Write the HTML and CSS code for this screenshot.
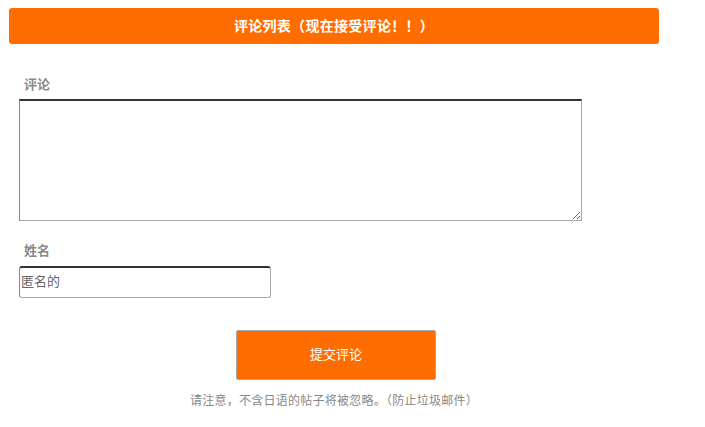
FILE: index.html
```html
<!DOCTYPE html>
<html lang="zh-CN">
<head>
    <meta charset="UTF-8">
    <meta name="viewport" content="width=device-width, initial-scale=1.0">
    <title>评论列表</title>
    <link rel="stylesheet" href="styles.css">
</head>
<body>
    <div class="wrap">
        <h2 class="comment-title">评论列表（现在接受评论！！）</h2>

        <form class="comment-form" onsubmit="return false;">
            <label class="field-label" for="comment">评论</label>
            <textarea id="comment" class="comment-box"></textarea>

            <label class="field-label name-label" for="name">姓名</label>
            <input id="name" class="name-box" type="text" value="匿名的">

            <button type="submit" class="submit-btn">提交评论</button>
            <p class="notice">请注意，不含日语的帖子将被忽略。（防止垃圾邮件）</p>
        </form>
    </div>
</body>
</html>
```

FILE: styles.css
```css
body {
    margin: 0;
    background-color: #fff;
    font-family: 'Noto Sans CJK SC', 'Noto Sans', sans-serif;
    color: #333;
}

.wrap {
    width: 650px;
    margin: 8px 0 0 9px;
}

.comment-title {
    margin: 0;
    height: 36px;
    line-height: 34px;
    background-color: #ff6c00;
    border-radius: 3px;
    color: #fff;
    font-size: 14px;
    font-weight: bold;
    letter-spacing: 0.3px;
    text-align: center;
}

.comment-form {
    margin-top: 30px;
    padding-left: 10px;
}

.field-label {
    display: block;
    padding-left: 5px;
    line-height: 20px;
    margin-bottom: 5px;
    font-size: 13px;
    font-weight: bold;
    color: #8a8a8a;
}

.comment-box {
    display: block;
    box-sizing: border-box;
    width: 563px;
    height: 122px;
    margin: 0;
    border: 1px solid #a9a9a9;
    border-top: 2px solid #333;
    border-left-color: #888;
    font-family: inherit;
}

.name-label {
    margin-top: 19px;
    margin-bottom: 6px;
}

.name-box {
    display: block;
    box-sizing: border-box;
    width: 252px;
    height: 32px;
    margin: 0;
    padding: 0 0 4px 1px;
    border: 1px solid #a9a9a9;
    border-top: 2px solid #333;
    border-left-color: #888;
    border-radius: 3px;
    font-family: inherit;
    font-size: 13px;
    color: #666;
}

.submit-btn {
    display: block;
    box-sizing: border-box;
    width: 200px;
    height: 50px;
    margin: 32px 0 0 217px;
    padding-bottom: 4px;
    background-color: #ff6c00;
    border: 1px solid #a9a9a9;
    border-radius: 2px;
    color: #fff;
    font-family: inherit;
    font-size: 13px;
    cursor: pointer;
}

.notice {
    margin: 12px 0 0 -10px;
    line-height: 16px;
    font-size: 12px;
    letter-spacing: 0.25px;
    color: #888;
    text-align: center;
}
```
